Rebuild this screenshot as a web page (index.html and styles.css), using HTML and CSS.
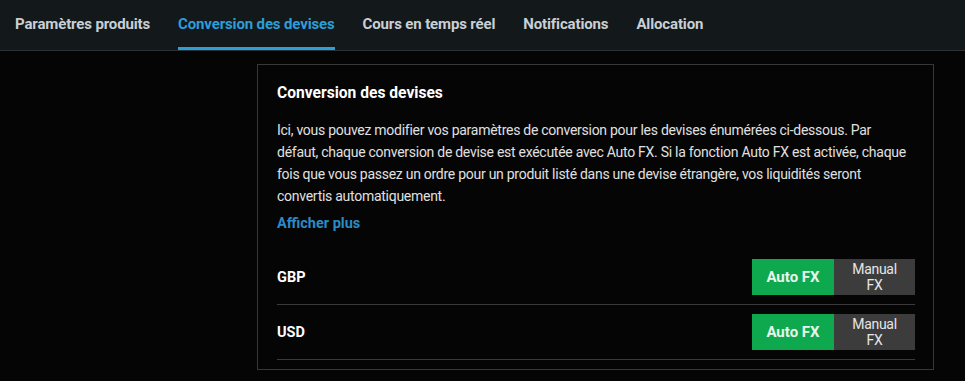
FILE: index.html
```html
<!DOCTYPE html>
<html lang="fr">
<head>
<meta charset="utf-8">
<title>Conversion des devises</title>
<link rel="stylesheet" href="styles.css">
</head>
<body>
<nav class="tabs">
  <a class="tab">Paramètres produits</a>
  <a class="tab active">Conversion des devises</a>
  <a class="tab">Cours en temps réel</a>
  <a class="tab">Notifications</a>
  <a class="tab">Allocation</a>
</nav>
<main class="layout">
  <aside class="side"></aside>
  <section class="card">
    <h2 class="card-title">Conversion des devises</h2>
    <p class="desc">Ici, vous pouvez modifier vos paramètres de conversion pour les devises énumérées ci-dessous. Par défaut, chaque conversion de devise est exécutée avec Auto FX. Si la fonction Auto FX est activée, chaque fois que vous passez un ordre pour un produit listé dans une devise étrangère, vos liquidités seront convertis automatiquement.</p>
    <a class="more">Afficher plus</a>
    <div class="rows">
      <div class="row">
        <span class="cur">GBP</span>
        <div class="switch">
          <button class="opt on">Auto FX</button>
          <button class="opt off">Manual FX</button>
        </div>
      </div>
      <div class="row">
        <span class="cur">USD</span>
        <div class="switch">
          <button class="opt on">Auto FX</button>
          <button class="opt off">Manual FX</button>
        </div>
      </div>
    </div>
  </section>
</main>
</body>
</html>
```

FILE: styles.css
```css
* { box-sizing: border-box; }
html, body {
  margin: 0;
  padding: 0;
  background: #050505;
  font-family: Roboto, "Liberation Sans", sans-serif;
  color: #e2e2e2;
}
.tabs {
  display: flex;
  gap: 28px;
  height: 51px;
  padding: 0 15px;
  background: #13181b;
  border-bottom: 1px solid #2b3134;
}
.tab {
  display: flex;
  align-items: center;
  height: 50px;
  font-size: 15px;
  letter-spacing: -0.14px;
  font-weight: 700;
  color: #c9d0d5;
  border-bottom: 3px solid transparent;
  padding-top: 1px;
  margin-bottom: -1px;
}
.tab.active {
  color: #2c9ed8;
  border-bottom-color: #2c9ed8;
}
.layout {
  display: flex;
  padding: 13px 31px 0 0;
}
.side {
  width: 257px;
  flex: none;
}
.card {
  flex: 1;
  border: 1px solid #383838;
  padding: 18px 18px 9px 19px;
  background: #050505;
}
.card-title {
  margin: 0;
  font-size: 15.6px;
  line-height: 20px;
  font-weight: 700;
  color: #ffffff;
}
.desc {
  margin: 16px 0 0;
  font-size: 14px;
  letter-spacing: -0.27px;
  line-height: 22px;
  color: #e0e0e0;
}
.more {
  display: block;
  margin-top: 6px;
  font-size: 14.5px;
  line-height: 22px;
  font-weight: 700;
  color: #2a8cc4;
}
.rows {
  margin-top: 15px;
}
.row {
  display: flex;
  align-items: center;
  justify-content: space-between;
  padding: 9px 0;
  border-bottom: 1px solid #3a3a3a;
}
.cur {
  font-size: 14.5px;
  font-weight: 700;
  color: #ffffff;
}
.switch {
  display: flex;
}
.opt {
  height: 36px;
  border: none;
  margin: 0;
  font-family: Roboto, "Liberation Sans", sans-serif;
  line-height: 16px;
  padding: 0 10px;
}
.opt.on {
  width: 82px;
  background: #0ea84f;
  color: #e8f6ec;
  font-size: 15px;
  font-weight: 700;
}
.opt.off {
  width: 81px;
  background: #3c3c3c;
  color: #e6e6e6;
  font-size: 14px;
  letter-spacing: -0.3px;
  font-weight: 400;
}
```
